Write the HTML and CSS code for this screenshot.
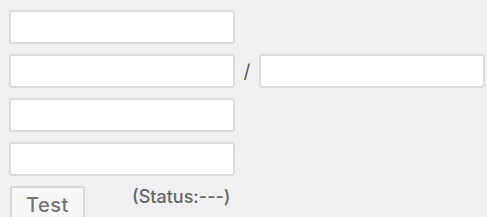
FILE: index.html
```html
<!DOCTYPE HTML>
<html>
<head>
    <meta charset="utf-8" />
    <title>Test</title>
    <link rel="stylesheet" href="styles.css">
</head>
<body>

<div class="form">
    <div class="row"><input type="text" class="field" /></div>
    <div class="row">
        <input type="text" class="field" />
        <span class="sep">/</span>
        <input type="text" class="field" />
    </div>
    <div class="row"><input type="text" class="field" /></div>
    <div class="row"><input type="text" class="field" /></div>
    <div class="row">
        <button class="btn">Test</button>
        <span class="status">(Status:---)</span>
    </div>
</div>

</body>
</html>
```

FILE: styles.css
```css
body {
    margin: 0;
    background: #f0f0f2;
    font-family: Inter, "DejaVu Sans", sans-serif;
    overflow: hidden;
}
.form {
    display: flex;
    flex-direction: column;
    gap: 10px;
    padding: 10px 0 0 9px;
}
.row {
    display: flex;
    align-items: center;
}
.field {
    box-sizing: border-box;
    width: 226px;
    height: 34px;
    margin: 0;
    border: 2px solid #dcdcdc;
    border-radius: 3px;
    background: #fff;
}
.sep {
    width: 24px;
    text-align: center;
    font-size: 19px;
    color: #555;
}
.btn {
    box-sizing: border-box;
    width: 75px;
    height: 36px;
    margin: 0 0 0 1px;
    align-self: flex-start;
    border: 2px solid #d8d8d8;
    border-radius: 3px;
    background: #f7f7f7;
    color: #757575;
    font-family: Inter, "DejaVu Sans", sans-serif;
    font-weight: 500;
    font-size: 20px;
    letter-spacing: 0.5px;
    padding: 2px 0 0;
}
.status {
    align-self: flex-start;
    margin-left: 47px;
    line-height: 22px;
    font-size: 18px;
    font-weight: 500;
    color: #666;
}
```
